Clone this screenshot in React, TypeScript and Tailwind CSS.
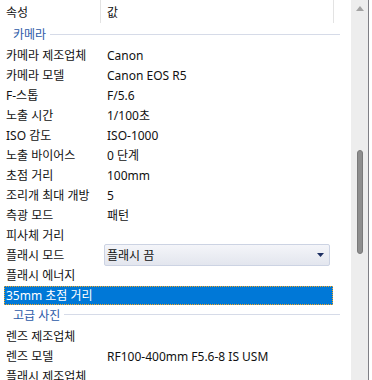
import React from 'react';

type Row =
  | { kind: 'cat'; label: string; h: string }
  | { kind: 'prop'; label: string; value?: string; combo?: boolean; selected?: boolean };

const rows: Row[] = [
  { kind: 'cat', label: '카메라', h: 'h-[20px]' },
  { kind: 'prop', label: '카메라 제조업체', value: 'Canon' },
  { kind: 'prop', label: '카메라 모델', value: 'Canon EOS R5' },
  { kind: 'prop', label: 'F-스톱', value: 'F/5.6' },
  { kind: 'prop', label: '노출 시간', value: '1/100초' },
  { kind: 'prop', label: 'ISO 감도', value: 'ISO-1000' },
  { kind: 'prop', label: '노출 바이어스', value: '0 단계' },
  { kind: 'prop', label: '초점 거리', value: '100mm' },
  { kind: 'prop', label: '조리개 최대 개방', value: '5' },
  { kind: 'prop', label: '측광 모드', value: '패턴' },
  { kind: 'prop', label: '피사체 거리' },
  { kind: 'prop', label: '플래시 모드', value: '플래시 끔', combo: true },
  { kind: 'prop', label: '플래시 에너지' },
  { kind: 'prop', label: '35mm 초점 거리', selected: true },
  { kind: 'cat', label: '고급 사진', h: 'h-[21px]' },
  { kind: 'prop', label: '렌즈 제조업체' },
  { kind: 'prop', label: '렌즈 모델', value: 'RF100-400mm F5.6-8 IS USM' },
  { kind: 'prop', label: '플래시 제조업체' },
];

const font = { fontFamily: '"Noto Sans", "Noto Sans CJK KR", sans-serif' };

export default function App() {
  return (
    <div className="w-[372px] h-[380px] overflow-hidden bg-white flex text-[12px] text-[#111]" style={font}>
      <div className="w-[351px] shrink-0 flex flex-col">
        <div className="h-[24px] shrink-0 flex items-start">
          <div className="w-[101px] h-[23px] border-r border-[#e3e3e3] pl-[6px] pt-[2px] flex items-center">속성</div>
          <div className="w-[233px] h-[23px] border-r border-[#e3e3e3] pl-[6px] pt-[2px] flex items-center">값</div>
        </div>
        {rows.map((r, i) =>
          r.kind === 'cat' ? (
            <div key={i} className={`${r.h} shrink-0 flex items-center pl-[13px] pr-[11px]`}>
              <span className="text-[#2c5aa8] pt-[2px]">{r.label}</span>
              <div className="flex-1 h-px bg-[#d6dbe8] ml-[4px]" />
            </div>
          ) : (
            <div key={i} className="h-[20px] shrink-0 flex items-center">
              {r.selected ? (
                <div className="ml-[4px] mt-[2px] w-[329px] h-[19px] bg-[#0078d7] text-white border border-dotted border-[#f5a623] flex items-center pl-[1px] pt-[1px]">
                  {r.label}
                </div>
              ) : (
                <>
                  <div className="w-[101px] pl-[6px] pt-[3px] whitespace-nowrap">{r.label}</div>
                  {r.combo ? (
                    <div className="ml-[3px] w-[226px] h-[22px] mt-[2px] rounded-[2px] border border-[#ccd3e3] bg-gradient-to-b from-[#f4f5f9] to-[#e3e6ee] flex items-center pl-[2px] pr-[5px]">
                      <span className="flex-1 pt-[1px]">{r.value}</span>
                      <svg width="7" height="4" viewBox="0 0 7 4">
                        <polygon points="0,0 7,0 3.5,4" fill="#1d2f62" />
                      </svg>
                    </div>
                  ) : (
                    <div className="pl-[6px] pt-[3px] whitespace-nowrap">{r.value}</div>
                  )}
                </>
              )}
            </div>
          )
        )}
      </div>
      <div className="w-[17px] shrink-0 h-full bg-[#ededed] flex flex-col items-center">
        <svg className="mt-[6px] ml-[1px]" width="8" height="5" viewBox="0 0 8 5">
          <polygon points="0,5 8,5 4,0" fill="#a3a3a3" />
        </svg>
        <div className="mt-[139px] ml-[1px] w-[6px] h-[104px] rounded-[3px] bg-[#8e8e8e] border border-[#7a7a7a]" />
      </div>
      <div className="w-px h-full bg-[#7f7f85]" />
      <div className="flex-1 h-full bg-white" />
    </div>
  );
}
